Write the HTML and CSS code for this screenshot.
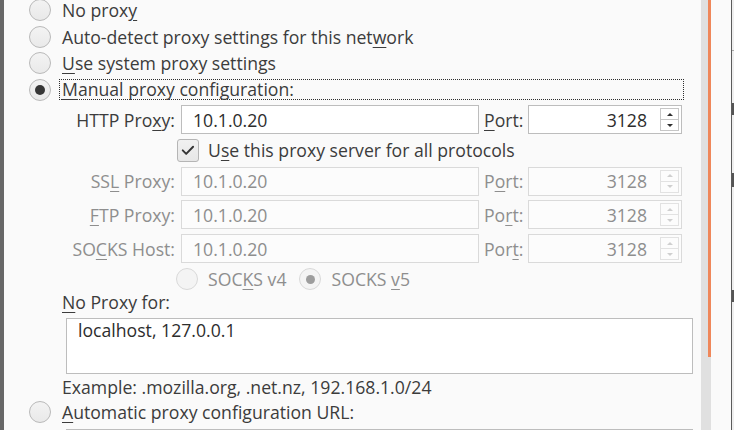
FILE: index.html
```html
<!DOCTYPE html>
<html lang="en">
<head>
<meta charset="utf-8">
<title>Connection Settings</title>
<link rel="stylesheet" href="styles.css">
</head>
<body>
<div class="screen">
  <div class="edge-left"></div>
  <div class="pane">
    <div class="options">
      <div class="opt"><span class="radio"></span><span class="txt">No prox<u>y</u></span></div>
      <div class="opt"><span class="radio"></span><span class="txt">Auto-detect proxy settings for this net<u>w</u>ork</span></div>
      <div class="opt"><span class="radio"></span><span class="txt"><u>U</u>se system proxy settings</span></div>
      <div class="opt"><span class="radio checked"></span><span class="txt focus"><u>M</u>anual proxy configuration:</span></div>
    </div>

    <div class="manual">
      <span class="lbl">HTTP Pro<u>x</u>y:</span>
      <div class="field">10.1.0.20</div>
      <span class="plbl"><u>P</u>ort:</span>
      <div class="field port"><span class="val">3128</span><span class="spin"><span class="up"></span><span class="down"></span></span></div>

      <div class="check-row">
        <span class="checkbox"><svg width="22" height="22" viewBox="0 0 22 22"><path d="M5.2 11.4 L9 15.3 L16.6 7.4" fill="none" stroke="#333" stroke-width="2.1" stroke-linecap="round" stroke-linejoin="round"/></svg></span>
        <span class="txt">U<u>s</u>e this proxy server for all protocols</span>
      </div>

      <span class="lbl off">SS<u>L</u> Proxy:</span>
      <div class="field off">10.1.0.20</div>
      <span class="plbl off">P<u>o</u>rt:</span>
      <div class="field port off"><span class="val">3128</span><span class="spin"><span class="up"></span><span class="down"></span></span></div>

      <span class="lbl off"><u>F</u>TP Proxy:</span>
      <div class="field off">10.1.0.20</div>
      <span class="plbl off">Po<u>r</u>t:</span>
      <div class="field port off"><span class="val">3128</span><span class="spin"><span class="up"></span><span class="down"></span></span></div>

      <span class="lbl off">SO<u>C</u>KS Host:</span>
      <div class="field off">10.1.0.20</div>
      <span class="plbl off">Por<u>t</u>:</span>
      <div class="field port off"><span class="val">3128</span><span class="spin"><span class="up"></span><span class="down"></span></span></div>

      <div class="socks-row">
        <span class="inline-opt"><span class="radio off"></span><span class="txt off">SOC<u>K</u>S v4</span></span>
        <span class="inline-opt"><span class="radio off checked"></span><span class="txt off">SOCKS <u>v</u>5</span></span>
      </div>
    </div>

    <div class="np-label"><u>N</u>o Proxy for:</div>
    <div class="textarea">localhost, 127.0.0.1</div>
    <div class="example">Example: .mozilla.org, .net.nz, 192.168.1.0/24</div>
    <div class="opt auto"><span class="radio"></span><span class="txt"><u>A</u>utomatic proxy configuration URL:</span></div>
    <div class="url-field"></div>
  </div>
  <div class="scrollbar"><div class="thumb"></div></div>
  <div class="gutter"></div>
  <div class="edge-right">
    <div class="frag f1"></div>
    <div class="frag f2"></div>
    <div class="frag f3"></div>
    <div class="frag f4"></div>
  </div>
</div>
</body>
</html>
```

FILE: styles.css
```css
* { box-sizing: border-box; }

html, body {
  margin: 0;
  padding: 0;
  background: #fafafa;
}

body {
  font-family: "Open Sans", "Noto Sans", "DejaVu Sans", sans-serif;
  font-size: 17.65px;
  color: #3c3c3c;
  line-height: 22px;
}

u {
  text-decoration: underline;
  text-decoration-thickness: 1px;
  text-underline-offset: 3px;
}

.screen {
  display: flex;
  width: 734px;
  height: 430px;
  overflow: hidden;
}

.edge-left {
  width: 4px;
  flex: none;
  background: #676767;
}

.pane {
  width: 697px;
  flex: none;
  overflow: hidden;
}

/* radio options */
.options {
  margin-top: -3.25px;
}

.opt {
  display: flex;
  align-items: center;
  height: 26.5px;
  padding-left: 25px;
}

.radio {
  flex: none;
  width: 22px;
  height: 22px;
  border-radius: 50%;
  border: 1px solid #b9b9b9;
  background: linear-gradient(#f3f3f3, #e9e9e9);
  display: inline-flex;
  align-items: center;
  justify-content: center;
}

.radio.checked::after {
  content: "";
  width: 10px;
  height: 10px;
  border-radius: 50%;
  background: #363636;
}

.radio.off {
  border-color: #d9d9d9;
  background: #f4f4f4;
}

.radio.off.checked::after {
  width: 9px;
  height: 9px;
  background: #9d9d9d;
}

.opt .txt {
  margin-left: 11px;
  white-space: nowrap;
}

.opt .txt.focus {
  flex: 1;
  margin-left: 8px;
  margin-right: 17px;
  padding-left: 2px;
  height: 21px;
  line-height: 19px;
  border: 1px dotted #2e2e2e;
}

/* manual configuration grid */
.manual {
  display: grid;
  grid-template-columns: 119px 298px 49px 154px;
  grid-template-rows: 29px 23px 29px 29px 29px 23px;
  row-gap: 4.8px;
  margin: 2.25px 0 0 58px;
  align-items: center;
}

.lbl {
  text-align: right;
  padding-right: 6px;
  white-space: nowrap;
}

.plbl {
  padding-left: 5px;
  white-space: nowrap;
}

.off {
  color: #8e8e8e;
}

.field {
  height: 29px;
  border: 1px solid #bdbdbd;
  background: #ffffff;
  color: #2d2d2d;
  padding-left: 11px;
  display: flex;
  align-items: center;
  white-space: nowrap;
}

.field.off {
  border-color: #dadada;
  background: #fcfcfc;
  color: #8e8e8e;
}

.field.port {
  padding-left: 0;
  padding-right: 2px;
}

.field.port .val {
  flex: 1;
  text-align: right;
  padding-right: 13px;
}

.spin {
  flex: none;
  width: 19px;
  height: 23px;
  border: 1px solid #c6c6c6;
  display: flex;
  flex-direction: column;
}

.spin .up,
.spin .down {
  flex: 1;
  display: flex;
  align-items: center;
  justify-content: center;
}

.spin .up {
  border-bottom: 1px solid #c6c6c6;
}

.spin .up::after {
  content: "";
  border-left: 3px solid transparent;
  border-right: 3px solid transparent;
  border-bottom: 3px solid #2f2f2f;
}

.spin .down::after {
  content: "";
  border-left: 3px solid transparent;
  border-right: 3px solid transparent;
  border-top: 3px solid #2f2f2f;
}

.field.off .spin {
  border-color: #e2e2e2;
}

.field.off .spin .up {
  border-bottom-color: #e2e2e2;
}

.field.off .spin .up::after {
  border-bottom-color: #cfcfcf;
}

.field.off .spin .down::after {
  border-top-color: #cfcfcf;
}

.check-row {
  grid-column: 2 / 5;
  display: flex;
  align-items: center;
  margin-left: -4px;
  height: 23px;
}

.checkbox {
  flex: none;
  width: 22px;
  height: 23px;
  border: 1px solid #b5b5b5;
  border-radius: 3px;
  background: linear-gradient(#f1f1f1, #e7e7e7);
  display: flex;
  align-items: center;
  justify-content: center;
}

.checkbox svg {
  display: block;
}

.check-row .txt {
  margin-left: 9px;
  white-space: nowrap;
}

.socks-row {
  grid-column: 2 / 5;
  display: flex;
  align-items: center;
  margin-left: -5px;
  gap: 13px;
}

.inline-opt {
  display: flex;
  align-items: center;
}

.inline-opt .txt {
  margin-left: 10px;
  white-space: nowrap;
}

/* no proxy */
.np-label {
  margin-left: 58px;
}

.textarea {
  margin: 5px 0 0 62px;
  width: 627px;
  height: 56px;
  border: 1px solid #bdbdbd;
  background: #ffffff;
  color: #2d2d2d;
  padding: 0 0 0 11px;
}

.example {
  margin: 2px 0 0 58px;
}

.opt.auto {
  margin-top: 1.25px;
}

.url-field {
  margin: 3px 0 0 62px;
  width: 627px;
  height: 29px;
  border: 1px solid #bdbdbd;
  background: #ffffff;
}

/* scrollbar and surroundings */
.scrollbar {
  width: 10px;
  flex: none;
  background: #e0e0e0;
  padding-left: 7px;
}

.thumb {
  width: 3px;
  height: 357px;
  background: #ef875a;
}

.gutter {
  width: 20px;
  flex: none;
  background: #fafafa;
}

.edge-right {
  width: 3px;
  flex: none;
  background: #efefef;
  border-left: 1px solid #5c5c5c;
  padding-top: 50px;
}

.frag {
  height: 1px;
  background: #a8a8a8;
}

.f1 { margin-top: 0; }
.f2 { margin-top: 52px; height: 12px; background: #555; }
.f3 { margin-top: 58px; height: 14px; background: #555; }
.f4 { margin-top: 103px; height: 12px; background: #555; }
```
